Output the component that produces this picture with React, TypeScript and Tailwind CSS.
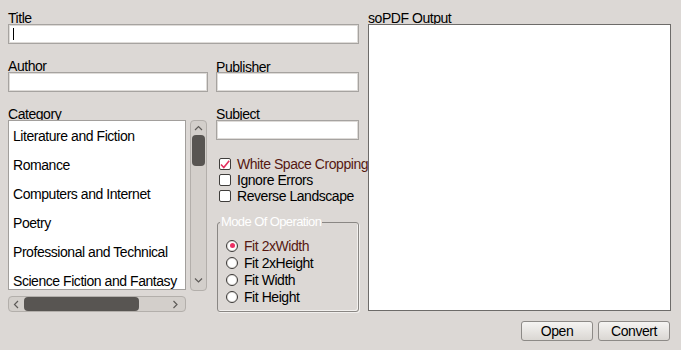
import React from 'react';

const font = { fontFamily: '"Liberation Sans", Arial, sans-serif' };

const categories = [
  'Literature and Fiction',
  'Romance',
  'Computers and Internet',
  'Poetry',
  'Professional and Technical',
  'Science Fiction and Fantasy',
];

function Label({ children }: { children: React.ReactNode }) {
  return <div className="h-[13px] whitespace-nowrap text-[14px] leading-[14px] tracking-[-0.45px] text-black">{children}</div>;
}

function TextBox({ width, cursor }: { width: string; cursor?: boolean }) {
  return (
    <div
      className={`relative h-[20px] ${width} border border-[#a6a3a0] bg-white shadow-[inset_0_0_0_1px_#dedbd8]`}
    >
      {cursor && <div className="ml-[4px] mt-[3px] h-[12px] w-px bg-black" />}
    </div>
  );
}

function Chevron({ dir }: { dir: 'up' | 'down' | 'left' | 'right' }) {
  const d = {
    up: 'M1 5 L4.5 1.5 L8 5',
    down: 'M1 1.5 L4.5 5 L8 1.5',
    left: 'M5 1 L1.5 4.5 L5 8',
    right: 'M1.5 1 L5 4.5 L1.5 8',
  }[dir];
  const horiz = dir === 'left' || dir === 'right';
  return (
    <svg width={horiz ? 7 : 9} height={horiz ? 9 : 7} viewBox={horiz ? '0 0 7 9' : '0 0 9 7'}>
      <path d={d} fill="none" stroke="#5e5b58" strokeWidth="1.2" />
    </svg>
  );
}

function Check({ checked, label, hot }: { checked?: boolean; label: string; hot?: boolean }) {
  return (
    <div className="flex h-[16px] items-center">
      <div className="ml-[3px] flex h-[12px] w-[12px] items-center justify-center rounded-[2px] border border-[#3f3d3b] bg-white">
        {checked && (
          <svg width="10" height="9" viewBox="0 0 10 9">
            <path d="M1 4.5 L3.8 7.5 L9.2 0.8" fill="none" stroke="#e4305f" strokeWidth="1.6" />
          </svg>
        )}
      </div>
      <span
        className={`ml-[6px] whitespace-nowrap text-[14px] leading-[14px] tracking-[-0.45px] ${hot ? 'text-[#561812]' : 'text-black'}`}
      >
        {label}
      </span>
    </div>
  );
}

function Radio({ checked, label, hot }: { checked?: boolean; label: string; hot?: boolean }) {
  return (
    <div className="flex h-[17px] items-center">
      <div className="ml-[8px] flex h-[12px] w-[12px] items-center justify-center rounded-full border border-[#3a3836] bg-white shadow-[inset_0_0_0_1px_#e6e3e0]">
        {checked && <div className="h-[5px] w-[5px] rounded-full bg-[#ec2f63]" />}
      </div>
      <span
        className={`ml-[6px] whitespace-nowrap text-[14px] leading-[14px] tracking-[-0.45px] ${hot ? 'text-[#561812]' : 'text-black'}`}
      >
        {label}
      </span>
    </div>
  );
}

export default function App() {
  return (
    <div className="flex h-[350px] w-[681px] overflow-hidden bg-[#dcd8d5]" style={font}>
      {/* Left side: fields */}
      <div className="ml-[8px] flex w-[351px] flex-col pt-[11px]">
        <Label>Title</Label>
        <TextBox width="w-[351px]" cursor />

        <div className="mt-[15px] flex">
          <div className="w-[200px]">
            <Label>Author</Label>
            <TextBox width="w-[200px]" />
          </div>
          <div className="ml-[8px] w-[143px]">
            <div className="pt-[1px]">
              <Label>Publisher</Label>
            </div>
            <div className="-mt-[1px]">
              <TextBox width="w-[143px]" />
            </div>
          </div>
        </div>

        <div className="mt-[15px] flex">
          {/* Category list */}
          <div className="w-[200px]">
            <Label>Category</Label>
            <div className="flex">
              <div className="relative h-[170px] w-[178px] overflow-hidden border border-[#a29f9c] bg-white">
                {categories.map((c) => (
                  <div
                    key={c}
                    className="flex h-[29px] items-center whitespace-nowrap pl-[4px] pt-[1px] text-[14px] tracking-[-0.45px] text-black"
                  >
                    {c}
                  </div>
                ))}
              </div>
              <div className="ml-[4px] flex h-[171px] w-[17px] flex-col items-center rounded-[4px] border border-[#b3afab] bg-[#d3cfcb]">
                <div className="flex h-[14px] items-center justify-center pt-[1px]">
                  <Chevron dir="up" />
                </div>
                <div className="h-[31px] w-[13px] rounded-[4px] bg-[#585552]" />
                <div className="flex-1" />
                <div className="flex h-[16px] items-center justify-center pb-[4px]">
                  <Chevron dir="down" />
                </div>
              </div>
            </div>
            <div className="mt-[5px] flex h-[16px] w-[178px] items-center rounded-[4px] border border-[#b3afab] bg-[#d3cfcb]">
              <div className="flex w-[15px] justify-center">
                <Chevron dir="left" />
              </div>
              <div className="h-[14px] w-[115px] rounded-[4px] bg-[#585552]" />
              <div className="flex-1" />
              <div className="flex w-[16px] justify-center pr-[4px]">
                <Chevron dir="right" />
              </div>
            </div>
          </div>

          {/* Subject and options */}
          <div className="ml-[8px] w-[143px]">
            <Label>Subject</Label>
            <TextBox width="w-[143px]" />
            <div className="mt-[16px] flex flex-col">
              <Check checked label="White Space Cropping" hot />
              <Check label="Ignore Errors" />
              <Check label="Reverse Landscape" />
            </div>
            <fieldset className="ml-[1px] mt-[11px] w-[142px] rounded-[3px] border border-[#8a8784] pb-[6px] pt-[8px] shadow-[inset_-1px_-1px_0_#f2f0ee,1px_1px_0_#f2f0ee]">
              <legend className="ml-[2px] whitespace-nowrap px-[1px] text-[13px] leading-[14px] tracking-[-0.6px] text-white">
                Mode Of Operation
              </legend>
              <Radio checked label="Fit 2xWidth" hot />
              <Radio label="Fit 2xHeight" />
              <Radio label="Fit Width" />
              <Radio label="Fit Height" />
            </fieldset>
          </div>
        </div>
      </div>

      {/* Right side: output */}
      <div className="ml-[9px] flex w-[303px] flex-col pt-[11px]">
        <Label>soPDF Output</Label>
        <div className="relative h-[287px] w-[303px] border border-[#6d6b69] bg-white" />
        <div className="mr-[1px] mt-[10px] flex justify-end gap-[5px]">
          {['Open', 'Convert'].map((b) => (
            <div
              key={b}
              className="flex h-[20px] w-[72px] items-center justify-center rounded-[3px] border border-[#8d8a87] bg-gradient-to-b from-[#f5f4f2] to-[#dad7d3] text-[14px] tracking-[-0.45px] text-black"
            >
              {b}
            </div>
          ))}
        </div>
      </div>
    </div>
  );
}
